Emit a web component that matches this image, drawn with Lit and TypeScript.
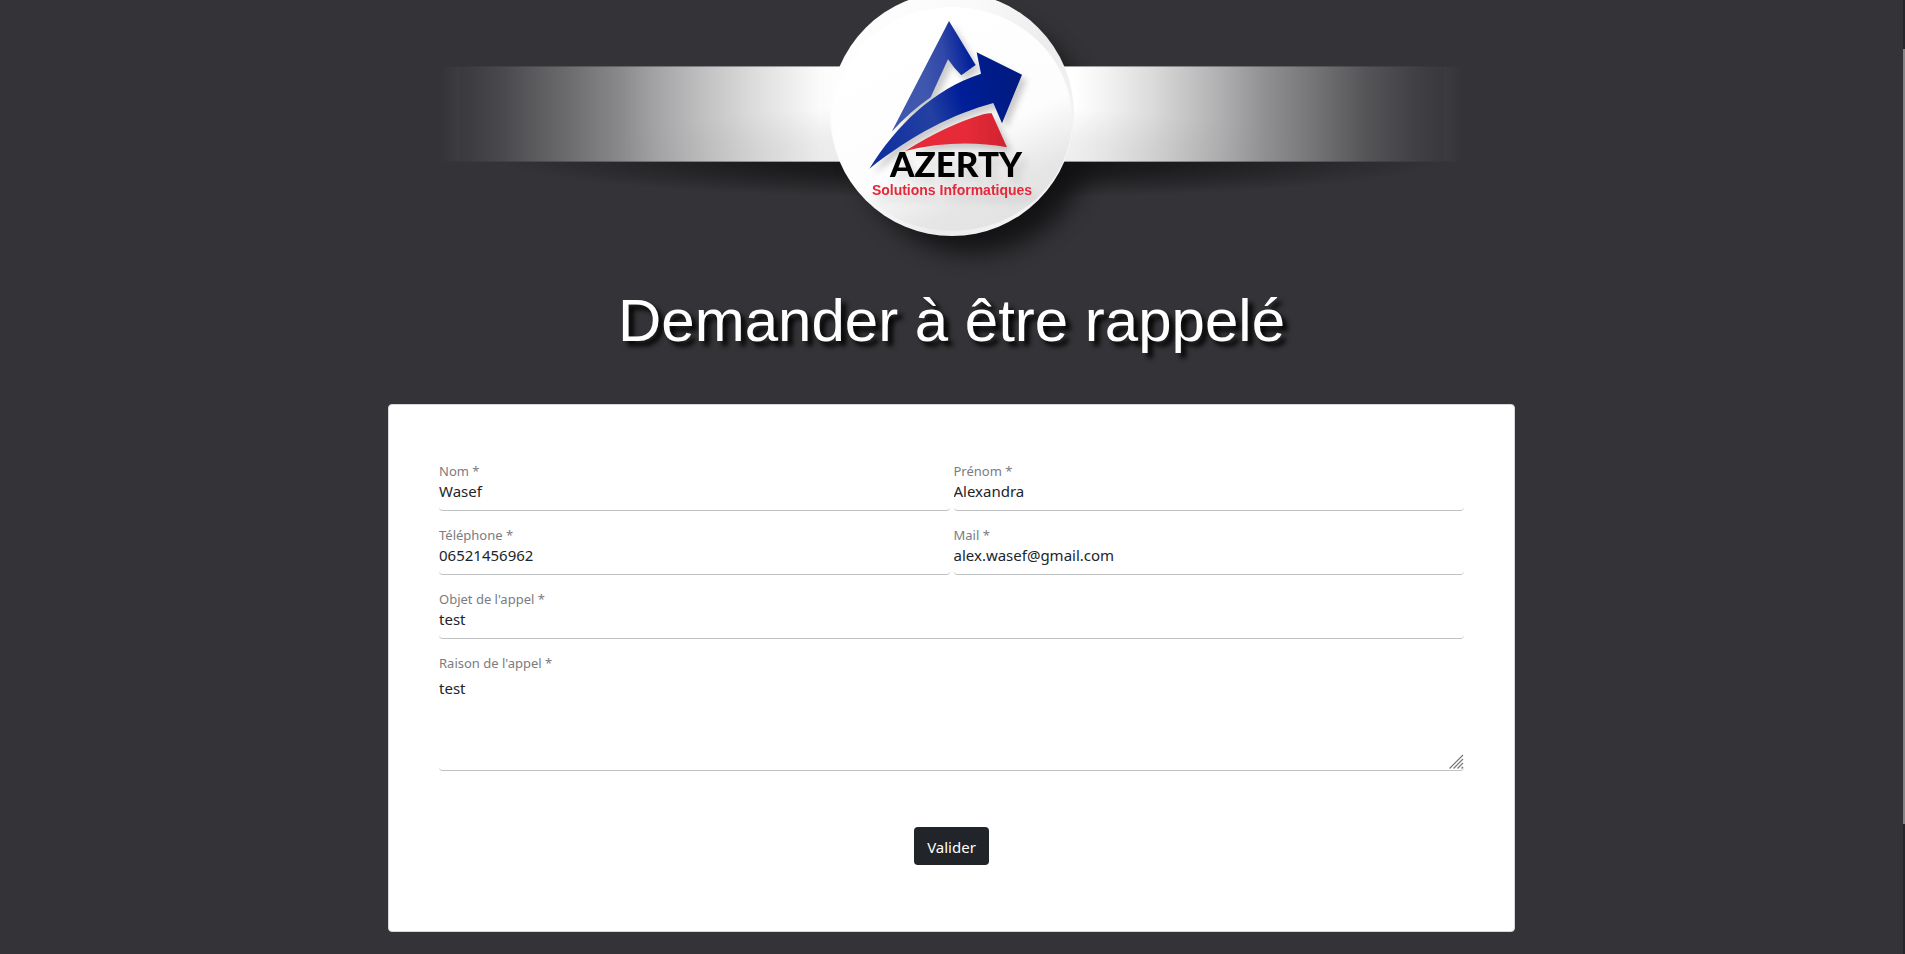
import { LitElement, html, css, svg } from "lit";
import { customElement, property } from "lit/decorators.js";

@customElement("azerty-banner")
export class AzertyBanner extends LitElement {
  static styles = css`
    :host {
      display: block;
    }
    .banner {
      display: block;
      width: 100%;
      height: auto;
      overflow: visible;
    }
    .name {
      font: 900 35px Lato, "Noto Sans", sans-serif;
      fill: #000;
    }
    .tagline {
      font: 700 14px "Liberation Sans", Arial, sans-serif;
      fill: #e3283a;
    }
  `;

  private defs() {
    return svg`
      <defs>
        <linearGradient id="band" x1="0" x2="1" y1="0" y2="0">
          <stop offset="0" stop-color="#fff" stop-opacity="0" />
          <stop offset=".032" stop-color="#fff" stop-opacity=".05" />
          <stop offset=".062" stop-color="#fff" stop-opacity=".11" />
          <stop offset=".088" stop-color="#fff" stop-opacity=".18" />
          <stop offset=".127" stop-color="#fff" stop-opacity=".28" />
          <stop offset=".176" stop-color="#fff" stop-opacity=".42" />
          <stop offset=".208" stop-color="#fff" stop-opacity=".54" />
          <stop offset=".26" stop-color="#fff" stop-opacity=".7" />
          <stop offset=".306" stop-color="#fff" stop-opacity=".83" />
          <stop offset=".371" stop-color="#fff" stop-opacity=".98" />
          <stop offset=".4" stop-color="#fff" />
          <stop offset=".62" stop-color="#fff" />
          <stop offset=".65" stop-color="#fff" stop-opacity=".94" />
          <stop offset=".693" stop-color="#fff" stop-opacity=".83" />
          <stop offset=".759" stop-color="#fff" stop-opacity=".62" />
          <stop offset=".804" stop-color="#fff" stop-opacity=".46" />
          <stop offset=".856" stop-color="#fff" stop-opacity=".31" />
          <stop offset=".905" stop-color="#fff" stop-opacity=".16" />
          <stop offset=".954" stop-color="#fff" stop-opacity=".06" />
          <stop offset="1" stop-color="#fff" stop-opacity="0" />
        </linearGradient>
        <radialGradient id="sheen" cx=".5" cy="1" r=".5" gradientTransform="translate(0 -.2) scale(1 1.2)">
          <stop offset="0" stop-color="#777" stop-opacity=".26" />
          <stop offset=".5" stop-color="#777" stop-opacity=".18" />
          <stop offset="1" stop-color="#777" stop-opacity="0" />
        </radialGradient>
        <radialGradient id="below" cx=".5" cy=".5" r=".5">
          <stop offset="0" stop-color="#0e0e10" stop-opacity=".95" />
          <stop offset=".45" stop-color="#0e0e10" stop-opacity=".65" />
          <stop offset="1" stop-color="#0e0e10" stop-opacity="0" />
        </radialGradient>
        <linearGradient id="disc" x1=".2" y1=".1" x2=".65" y2="1">
          <stop offset="0" stop-color="#fff" />
          <stop offset=".6" stop-color="#fdfdfd" />
          <stop offset=".85" stop-color="#e6e6e7" />
          <stop offset="1" stop-color="#e3e3e4" />
        </linearGradient>
        <linearGradient id="rim" x1="0" y1="0" x2="1" y2=".6">
          <stop offset="0" stop-color="#fff" />
          <stop offset=".45" stop-color="#fafafa" />
          <stop offset=".75" stop-color="#ececec" />
          <stop offset="1" stop-color="#f4f4f4" />
        </linearGradient>
        <linearGradient id="peak" gradientUnits="userSpaceOnUse" x1="300" y1="200" x2="450" y2="170">
          <stop offset="0" stop-color="#3f58ae" />
          <stop offset=".5" stop-color="#3148a8" />
          <stop offset="1" stop-color="#02209a" />
        </linearGradient>
        <linearGradient id="arrow" gradientUnits="userSpaceOnUse" x1="170" y1="420" x2="600" y2="280">
          <stop offset="0" stop-color="#10309f" />
          <stop offset=".4" stop-color="#2440a2" />
          <stop offset=".62" stop-color="#001f98" />
          <stop offset="1" stop-color="#001a80" />
        </linearGradient>
        <linearGradient id="base" x1="0" x2="1">
          <stop offset=".6" stop-color="#e62a38" />
          <stop offset="1" stop-color="#d02331" />
        </linearGradient>
        <filter id="soft" x="-25%" y="-25%" width="160%" height="160%" color-interpolation-filters="sRGB">
          <feGaussianBlur stdDeviation="12" />
        </filter>
        <filter id="lift" x="-10%" y="-10%" width="130%" height="130%" color-interpolation-filters="sRGB">
          <feDropShadow dx="14" dy="16" stdDeviation="10" flood-color="#000" flood-opacity=".2" />
        </filter>
        <filter id="lift-text" x="-10%" y="-30%" width="130%" height="200%" color-interpolation-filters="sRGB">
          <feDropShadow dx="5" dy="6" stdDeviation="4" flood-color="#000" flood-opacity=".12" />
        </filter>
        <clipPath id="under"><rect x="0" y="162" width="1024" height="60" /></clipPath>
      </defs>
    `;
  }

  render() {
    return html`
      <svg class="banner" viewBox="0 0 1024 264" role="img" aria-label="AZERTY Solutions Informatiques">
        ${this.defs()}
        <g clip-path="url(#under)">
          <ellipse cx="530" cy="160" rx="470" ry="38" fill="url(#below)" />
        </g>
        <circle cx="533" cy="136" r="117" fill="#111113" opacity=".95" filter="url(#soft)" />
        <rect x="0" y="66" width="1024" height="96" fill="url(#band)" opacity=".55" />
        <rect x="20" y="67" width="984" height="94" fill="#343337" />
        <rect x="0" y="67" width="1024" height="94" fill="url(#band)" />
        <rect x="140" y="67" width="744" height="94" fill="url(#sheen)" opacity=".6" />
        <circle cx="512" cy="114" r="122" fill="url(#rim)" />
        <ellipse cx="512" cy="119" rx="120" ry="112" fill="url(#disc)" />
        <g transform="translate(380 0) scale(.33333)" filter="url(#lift)">
          <path
            fill="url(#peak)"
            d="M387 63 467 195 424 226Q403 206 384 178L332 292Q273 333 215 395Z"
          />
          <path
            fill="url(#arrow)"
            d="M470 157 606 224 546 370 520 309C400 342 280 402 148 506 230 375 340 268 483 221Z"
          />
          <path
            fill="url(#base)"
            d="M515 340 561 442Q410 415 256 453 380 375 490 343 505 339 515 340Z"
          />
        </g>
        <g filter="url(#lift-text)">
          <text class="name" x="516" y="177" text-anchor="middle">AZERTY</text>
          <text class="tagline" x="512" y="195" text-anchor="middle">Solutions Informatiques</text>
        </g>
      </svg>
    `;
  }
}

@customElement("form-field")
export class FormField extends LitElement {
  @property() label = "";
  @property() value = "";
  @property() type = "text";
  @property({ type: Boolean }) multiline = false;

  static styles = css`
    :host {
      display: block;
      min-width: 0;
    }
    .label {
      display: block;
      font-size: 13px;
      line-height: 18px;
      color: #7b7c80;
    }
    .control {
      display: block;
      box-sizing: border-box;
      width: 100%;
      margin: 0;
      border: 0;
      border-bottom: 1px solid #c0c1c3;
      border-radius: 4px;
      outline: 0;
      background: transparent;
      color: #212529;
      font-family: inherit;
      font-size: 15px;
      line-height: 20px;
    }
    .line {
      height: 31px;
      padding: 1px 0 9px;
    }
    .area {
      height: 99px;
      padding: 6px 0;
      resize: none;
    }
    .box {
      position: relative;
    }
    .grip {
      position: absolute;
      right: 0;
      bottom: 1px;
      width: 16px;
      height: 16px;
      pointer-events: none;
    }
  `;

  render() {
    return html`
      <label class="label" for="control">${this.label} *</label>
      ${this.multiline
        ? html`<div class="box">
            <textarea id="control" class="control area" required .value=${this.value}></textarea>
            <svg class="grip" viewBox="0 0 16 16" aria-hidden="true">
              <path
                d="M1.500 14.500 15 1M5.500 14.500 15 5M9.500 14.500 15 9M13.500 14.500 15 13"
                stroke="#77777a"
                stroke-width="1.200"
              />
            </svg>
          </div>`
        : html`<input id="control" class="control line" type=${this.type} required .value=${this.value} />`}
    `;
  }
}

@customElement("app-root")
export class AppRoot extends LitElement {
  static styles = css`
    :host {
      display: grid;
      grid-template-columns: minmax(0, 1fr) 2px;
      min-height: 100vh;
      background: #343337;
      font-family: "Noto Sans", "Open Sans", sans-serif;
    }
    .page {
      display: flex;
      flex-direction: column;
      align-items: center;
      padding-bottom: 20px;
    }
    .logo {
      width: 100%;
      max-width: 1024px;
    }
    .title {
      margin: 21px 16px 47px;
      color: #fff;
      font: 400 60px/72px "Liberation Sans", Arial, sans-serif;
      text-align: center;
      text-shadow: 5px 5px 5px #000;
    }
    .card {
      box-sizing: border-box;
      width: 100%;
      max-width: 1127px;
      padding: 57px 50px 66px;
      border: 1px solid #d8d8d9;
      border-radius: 4px;
      background: #fff;
    }
    .fields {
      display: grid;
      grid-template-columns: repeat(2, minmax(0, 1fr));
      gap: 15px 4px;
    }
    .wide {
      grid-column: 1 / -1;
    }
    .actions {
      display: flex;
      justify-content: center;
      margin-top: 56px;
    }
    .submit {
      height: 38px;
      padding: 2px 13px 0;
      border: 0;
      border-radius: 4px;
      background: #212529;
      color: #fff;
      font-family: inherit;
      font-size: 15px;
      line-height: 24px;
    }
    .rail {
      display: grid;
      grid-template-rows: 49fr 775fr 130fr;
      background: #27262a;
    }
    .thumb {
      grid-row: 2;
      background: #858487;
    }
  `;

  render() {
    return html`
      <main class="page">
        <azerty-banner class="logo"></azerty-banner>
        <h1 class="title">Demander à être rappelé</h1>
        <form class="card" @submit=${(e: Event) => e.preventDefault()}>
          <div class="fields">
            <form-field label="Nom" value="Wasef"></form-field>
            <form-field label="Prénom" value="Alexandra"></form-field>
            <form-field label="Téléphone" type="tel" value="06521456962"></form-field>
            <form-field label="Mail" type="email" value="alex.wasef@gmail.com"></form-field>
            <form-field class="wide" label="Objet de l'appel" value="test"></form-field>
            <form-field class="wide" label="Raison de l'appel" value="test" multiline></form-field>
          </div>
          <div class="actions">
            <button class="submit" type="submit">Valider</button>
          </div>
        </form>
      </main>
      <div class="rail" aria-hidden="true"><div class="thumb"></div></div>
    `;
  }
}
